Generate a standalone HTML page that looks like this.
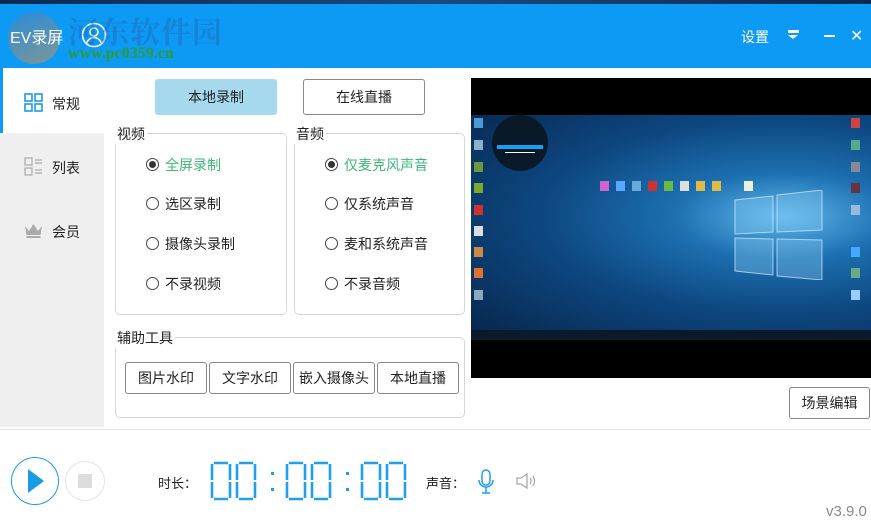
<!DOCTYPE html>
<html><head><meta charset="utf-8"><style>
*{margin:0;padding:0;box-sizing:border-box}
body{width:871px;height:531px;overflow:hidden;background:#fff;font-family:"Liberation Sans","Noto Sans CJK SC",sans-serif;font-size:14px;color:#222;position:relative}
.a{position:absolute}
.top{left:0;top:0;width:871px;height:68px;background:#0d9af5}
.strip{left:0;top:0;width:871px;height:4px;background:linear-gradient(90deg,#0a2a50,#1a4a80,#0a2a50)}
.side{left:0;top:133px;width:104px;height:294px;background:#efefef}
.btn{position:absolute;border:1px solid #888;border-radius:3px;background:#fff;text-align:center;font-size:14px}
.grp{position:absolute;border:1px solid #d6d6d6;border-radius:5px}
.lg{position:absolute;background:#fff;padding:0 2px;font-size:14px}
.rd{position:absolute;font-size:14px;white-space:nowrap}
.rd i{display:inline-block;width:13px;height:13px;border:1px solid #444;border-radius:50%;vertical-align:-1px;margin-right:6px;position:relative}
.rd i.on:after{content:"";position:absolute;left:2px;top:2px;width:7px;height:7px;border-radius:50%;background:#333}
.g{color:#3cb878}
.ic{position:absolute;width:9px;height:10px}
</style></head><body>
<div class="a top"></div><div class="a strip"></div>
<div class="a" style="left:8px;top:12px;width:52px;height:52px;border-radius:50%;background:linear-gradient(160deg,rgba(60,130,200,.6),rgba(170,150,110,.7))"></div>
<div class="a" style="left:10px;top:24px;color:#fff;font-size:16px">EV录屏</div>
<svg class="a" style="left:81px;top:22px" width="26" height="26" viewBox="0 0 26 26"><circle cx="13" cy="13" r="11.5" fill="none" stroke="#fff" stroke-width="1.6"/><circle cx="13" cy="10" r="4" fill="none" stroke="#fff" stroke-width="1.6"/><path d="M5.5 21c2-4 4.5-5.5 7.5-5.5s5.5 1.5 7.5 5.5" fill="none" stroke="#fff" stroke-width="1.6"/></svg>
<div class="a" style="left:68px;top:8px;font-size:30px;font-weight:bold;color:rgba(40,90,160,.35);font-family:'Noto Serif CJK SC',serif;letter-spacing:1px">河东软件园</div>
<div class="a" style="left:68px;top:45px;font-size:16px;font-weight:bold;color:#2a9a3a;font-family:'Liberation Serif',serif">www.pc0359.cn</div>
<div class="a" style="left:741px;top:27px;color:#fff;font-size:14px">设置</div>
<div class="a" style="left:788px;top:30px;width:11px;height:3px;background:#fff"></div>
<div class="a" style="left:788px;top:35px;width:0;height:0;border-left:5.5px solid transparent;border-right:5.5px solid transparent;border-top:4px solid #fff"></div>
<div class="a" style="left:824px;top:35px;width:11px;height:2px;background:#fff"></div>
<div class="a" style="left:850px;top:26px;color:#fff;font-size:16px">✕</div>

<div class="a side"></div>
<div class="a" style="left:0;top:68px;width:3px;height:65px;background:#0d9af5"></div>
<svg class="a" style="left:24px;top:93px" width="19" height="19"><g fill="none" stroke="#1a9be6" stroke-width="1.6"><rect x="1" y="1" width="7" height="7"/><rect x="11" y="1" width="7" height="7"/><rect x="1" y="11" width="7" height="7"/><rect x="11" y="11" width="7" height="7"/></g></svg>
<div class="a" style="left:52px;top:94px">常规</div>
<svg class="a" style="left:24px;top:157px" width="19" height="19"><g fill="none" stroke="#aaa" stroke-width="1.2"><rect x="1" y="1" width="7" height="7"/><rect x="1" y="11" width="7" height="7"/><path d="M11 3h7M11 6h7M11 13h7M11 16h7"/></g></svg>
<div class="a" style="left:52px;top:158px">列表</div>
<svg class="a" style="left:24px;top:223px" width="19" height="15"><path d="M1 3l4 5 4.5-7 4.5 7 4-5-1.5 9H2.5z M2.5 13h14v2h-14z" fill="#aaa"/></svg>
<div class="a" style="left:52px;top:222px">会员</div>

<div class="btn" style="left:155px;top:79px;width:122px;height:36px;background:#a6d8ee;border:none;line-height:36px">本地录制</div>
<div class="btn" style="left:303px;top:79px;width:122px;height:36px;line-height:34px">在线直播</div>

<div class="grp" style="left:115px;top:133px;width:172px;height:182px"></div>
<div class="lg" style="left:115px;top:124px">视频</div>
<div class="rd" style="left:146px;top:155px"><i class="on"></i><span class="g">全屏录制</span></div>
<div class="rd" style="left:146px;top:194px"><i></i>选区录制</div>
<div class="rd" style="left:146px;top:234px"><i></i>摄像头录制</div>
<div class="rd" style="left:146px;top:274px"><i></i>不录视频</div>

<div class="grp" style="left:294px;top:133px;width:171px;height:182px"></div>
<div class="lg" style="left:294px;top:124px">音频</div>
<div class="rd" style="left:325px;top:155px"><i class="on"></i><span class="g">仅麦克风声音</span></div>
<div class="rd" style="left:325px;top:194px"><i></i>仅系统声音</div>
<div class="rd" style="left:325px;top:234px"><i></i>麦和系统声音</div>
<div class="rd" style="left:325px;top:274px"><i></i>不录音频</div>

<div class="grp" style="left:115px;top:337px;width:350px;height:81px"></div>
<div class="lg" style="left:115px;top:328px">辅助工具</div>
<div class="btn" style="left:125px;top:362px;width:82px;height:32px;line-height:30px">图片水印</div>
<div class="btn" style="left:209px;top:362px;width:82px;height:32px;line-height:30px">文字水印</div>
<div class="btn" style="left:293px;top:362px;width:82px;height:32px;line-height:30px">嵌入摄像头</div>
<div class="btn" style="left:377px;top:362px;width:82px;height:32px;line-height:30px">本地直播</div>

<div class="a" style="left:471px;top:78px;width:400px;height:300px;background:#000"></div>
<div class="a" style="left:471px;top:115px;width:400px;height:225px;background:radial-gradient(ellipse at 78% 45%,#5fb6ea 0%,#1c6fb0 25%,#0d4780 55%,#07244a 100%)"></div>
<svg class="a" style="left:730px;top:190px" width="100" height="90"><g fill="rgba(140,205,245,.35)" stroke="rgba(210,240,255,.7)"><path d="M5 10l38-4v36l-38 2z"/><path d="M47 5l45-5v40l-45 2z"/><path d="M5 48l38 1v36l-38-4z"/><path d="M47 49l45 1v40l-45-4z"/></g></svg>
<div class="a" style="left:471px;top:330px;width:400px;height:10px;background:#0a1a2a"></div>
<div class="a" style="left:492px;top:115px;width:56px;height:56px;border-radius:50%;background:rgba(10,20,30,.85)"></div>
<div class="a" style="left:497px;top:145px;width:46px;height:4px;background:#18a0f0"></div>
<div class="a" style="left:505px;top:152px;width:30px;height:1px;background:#fff"></div>
<div class="ic" style="left:474px;top:118px;background:#4a9ad8"></div>
<div class="ic" style="left:474px;top:140px;background:#8ab0cc"></div>
<div class="ic" style="left:474px;top:162px;background:#6a9a40"></div>
<div class="ic" style="left:474px;top:183px;background:#7aa830"></div>
<div class="ic" style="left:474px;top:205px;background:#d03030"></div>
<div class="ic" style="left:474px;top:226px;background:#ddd"></div>
<div class="ic" style="left:474px;top:247px;background:#c84"></div>
<div class="ic" style="left:474px;top:268px;background:#e07030"></div>
<div class="ic" style="left:474px;top:290px;background:#8ab"></div>
<div class="ic" style="left:851px;top:118px;background:#c44"></div>
<div class="ic" style="left:851px;top:140px;background:#5a8"></div>
<div class="ic" style="left:851px;top:162px;background:#889"></div>
<div class="ic" style="left:851px;top:183px;background:#634"></div>
<div class="ic" style="left:851px;top:205px;background:#9bd"></div>
<div class="ic" style="left:851px;top:247px;background:#4af"></div>
<div class="ic" style="left:851px;top:268px;background:#6a8"></div>
<div class="ic" style="left:851px;top:290px;background:#9cf"></div>
<div class="ic" style="left:600px;top:181px;background:#c6c"></div>
<div class="ic" style="left:616px;top:181px;background:#5af"></div>
<div class="ic" style="left:632px;top:181px;background:#6ad"></div>
<div class="ic" style="left:648px;top:181px;background:#c33"></div>
<div class="ic" style="left:664px;top:181px;background:#6b4"></div>
<div class="ic" style="left:680px;top:181px;background:#ddd"></div>
<div class="ic" style="left:696px;top:181px;background:#db4"></div>
<div class="ic" style="left:712px;top:181px;background:#db4"></div>
<div class="ic" style="left:744px;top:181px;background:#eed"></div>

<div class="btn" style="left:789px;top:387px;width:81px;height:32px;line-height:30px">场景编辑</div>
<div class="a" style="left:0;top:429px;width:871px;height:1px;background:#e6e6e6"></div>

<div class="a" style="left:11px;top:457px;width:48px;height:48px;border:1.5px solid #1a9be6;border-radius:50%"></div>
<div class="a" style="left:28px;top:469px;width:0;height:0;border-top:12px solid transparent;border-bottom:12px solid transparent;border-left:16px solid #1a9be6"></div>
<div class="a" style="left:65px;top:461px;width:40px;height:40px;border:1.5px solid #e3e3e3;border-radius:50%"></div>
<div class="a" style="left:78px;top:474px;width:14px;height:14px;background:#ddd"></div>
<div class="a" style="left:158px;top:473px;font-size:13px">时长：</div>
<svg class="a" style="left:205px;top:460px" width="210" height="42">
<g fill="none" stroke="#1e9ff0" stroke-width="2.6">
<path d="M7 4v16M7 22v16M25 4v16M25 22v16M9 3h14M9 39h14"/>
<path d="M32 4v16M32 22v16M50 4v16M50 22v16M34 3h14M34 39h14"/>
<path d="M82 4v16M82 22v16M100 4v16M100 22v16M84 3h14M84 39h14"/>
<path d="M107 4v16M107 22v16M125 4v16M125 22v16M109 3h14M109 39h14"/>
<path d="M157 4v16M157 22v16M175 4v16M175 22v16M159 3h14M159 39h14"/>
<path d="M182 4v16M182 22v16M200 4v16M200 22v16M184 3h14M184 39h14"/>
</g>
<g fill="#1e9ff0"><rect x="66" y="12" width="3" height="3"/><rect x="66" y="28" width="3" height="3"/><rect x="141" y="12" width="3" height="3"/><rect x="141" y="28" width="3" height="3"/></g>
</svg>
<div class="a" style="left:426px;top:473px;font-size:13px">声音：</div>
<svg class="a" style="left:477px;top:469px" width="18" height="26"><g fill="none" stroke="#1e9ff0" stroke-width="1.5"><rect x="5" y="1" width="8" height="15" rx="4"/><path d="M2 11a7 7 0 0 0 14 0M9 18v6M5 24h8"/></g></svg>
<svg class="a" style="left:516px;top:472px" width="22" height="18"><g fill="none" stroke="#aaa" stroke-width="1.3"><path d="M1 6h4l6-4v14l-6-4H1z"/><path d="M14 6q2 3 0 6M17 4q3 5 0 10"/></g></svg>
<div class="a" style="left:826px;top:503px;font-size:15px;color:#888">v3.9.0</div>
</body></html>
